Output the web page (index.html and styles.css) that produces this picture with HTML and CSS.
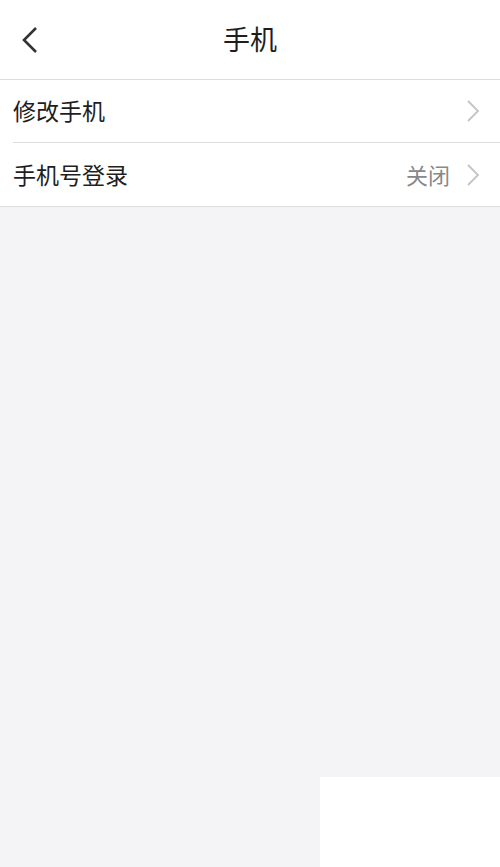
FILE: index.html
```html
<html>
	<head>
		<meta http-equiv="Content-Type" content="text/html; charset=utf-8">
		<title>手机</title>
		<link rel="stylesheet" href="styles.css">
	</head>
	<body>
		<div class="header">
			<span class="back">
				<svg width="18" height="28" viewBox="0 0 18 28"><path d="M15 2 L3 14 L15 26" fill="none" stroke="#333" stroke-width="2.6"/></svg>
			</span>
			<h1>手机</h1>
		</div>
		<div class="list">
			<div class="row">
				<span class="label">修改手机</span>
				<span class="arrow"><svg width="14" height="24" viewBox="0 0 14 24"><path d="M2 2 L12 12 L2 22" fill="none" stroke="#c4c4c4" stroke-width="1.8"/></svg></span>
			</div>
			<div class="row">
				<span class="label">手机号登录</span>
				<span class="value">关闭</span>
				<span class="arrow"><svg width="14" height="24" viewBox="0 0 14 24"><path d="M2 2 L12 12 L2 22" fill="none" stroke="#c4c4c4" stroke-width="1.8"/></svg></span>
			</div>
		</div>
		<div class="patch"></div>
	</body>
</html>
```
FILE: styles.css
```css
*{
	margin:0;
	padding:0;
}

body{
	font-family:"Noto Sans CJK SC", "Noto Sans", sans-serif;
	background-color:#f4f4f6;
	width:500px;
	height:867px;
	overflow:hidden;
	position:relative;
}

.header{
	height:79px;
	background-color:#fff;
	border-bottom:1px solid #dcdcdc;
	display:flex;
	align-items:center;
	justify-content:center;
	position:relative;
}

.header h1{
	font-size:27px;
	font-weight:normal;
	color:#1e1e1e;
	margin-top:-2px;
}

.back{
	position:absolute;
	left:21px;
	top:26px;
}

.list{
	background-color:#fff;
	border-bottom:1px solid #dcdcdc;
}

.row{
	height:62px;
	display:flex;
	align-items:center;
	margin-left:13px;
	padding-right:20px;
}

.row + .row{
	border-top:1px solid #dcdcdc;
	height:63px;
}

.label{
	flex:1;
	font-size:23px;
	color:#1e1e1e;
	margin-top:-2px;
}

.value{
	font-size:22px;
	color:#888;
	margin-right:16px;
	margin-top:-2px;
}

.arrow{
	display:flex;
}

.patch{
	position:absolute;
	left:320px;
	top:777px;
	width:180px;
	height:90px;
	background-color:#fff;
}
```
